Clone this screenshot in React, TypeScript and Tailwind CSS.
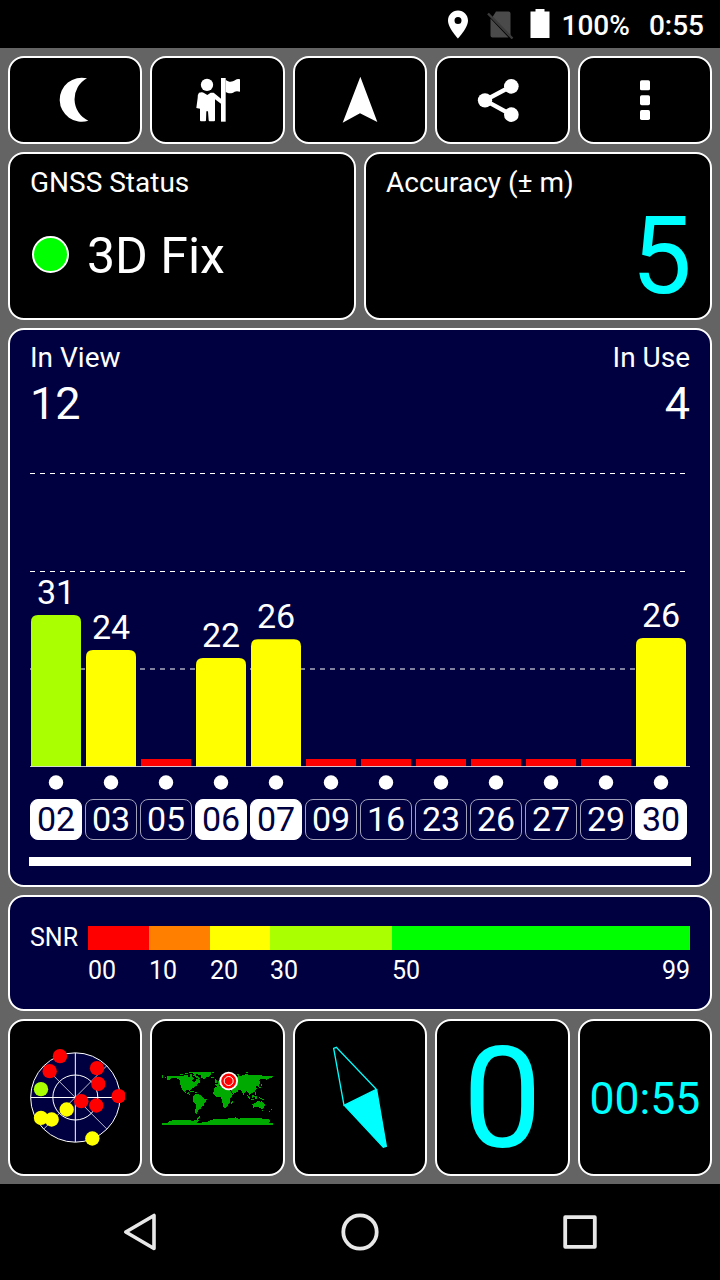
import type { ReactNode } from 'react';

type Satellite = { id: string; snr?: number; top: number; color: string; used?: boolean };

// top = y of the bar inside the 660x310 chart
const satellites: Satellite[] = [
  { id: '02', snr: 31, top: 158, color: '#aaff00', used: true },
  { id: '03', snr: 24, top: 193, color: '#ffff00' },
  { id: '05', top: 302, color: '#ff0000' },
  { id: '06', snr: 22, top: 201, color: '#ffff00', used: true },
  { id: '07', snr: 26, top: 182.2, color: '#ffff00', used: true },
  { id: '09', top: 302, color: '#ff0000' },
  { id: '16', top: 302, color: '#ff0000' },
  { id: '23', top: 302, color: '#ff0000' },
  { id: '26', top: 302, color: '#ff0000' },
  { id: '27', top: 302, color: '#ff0000' },
  { id: '29', top: 302, color: '#ff0000' },
  { id: '30', snr: 26, top: 181, color: '#ffff00', used: true },
];

const snrScale = [
  { label: '00', className: 'w-[61px] bg-[#ff0000]' },
  { label: '10', className: 'w-[61px] bg-[#ff8000]' },
  { label: '20', className: 'w-[60.4px] bg-[#ffff00]' },
  { label: '30', className: 'w-[121.6px] bg-[#aaff00]' },
  { label: '50', className: 'w-[298px] bg-[#00ff00]' },
];

const skyDots = [
  { x: 180, y: 123, color: '#ff0000' },
  { x: 149, y: 168, color: '#ff0000' },
  { x: 291, y: 159, color: '#ff0000' },
  { x: 295, y: 206, color: '#ff0000' },
  { x: 356, y: 243, color: '#ff0000' },
  { x: 289, y: 271, color: '#ff0000' },
  { x: 244, y: 258, color: '#ff0000' },
  { x: 123, y: 222, color: '#aaff00' },
  { x: 200, y: 283, color: '#ffff00' },
  { x: 123, y: 308, color: '#ffff00' },
  { x: 155, y: 313, color: '#ffff00' },
  { x: 277, y: 370, color: '#ffff00' },
];

function StatusBar() {
  return (
    <header className="flex h-12 items-center justify-end pr-4 text-[28px] leading-[48px] font-medium">
      <svg className="mr-[17px] h-[30px] w-6" viewBox="0 0 24 30" fill="#fff">
        <path
          fillRule="evenodd"
          d="M12 1.5C6.3 1.5 2 6 2 11.5 2 19 12 29.5 12 29.5S22 19 22 11.5C22 6 17.700 1.500 12 1.500zM12 8a3.500 3.500 0 1 1 0 7 3.500 3.500 0 0 1 0-7z"
        />
      </svg>
      <svg className="mr-[16px] h-[30px] w-[27px]" viewBox="0 0 27 30">
        <path d="M9 2.500h12.500a2 2 0 0 1 2 2v22L5.500 8zM3.500 9.500L21.500 28.500H5.500a2 2 0 0 1-2-2z" fill="#4a4a4a" />
        <path d="M1 4.500L25.500 29.500" stroke="#3c3c3c" strokeWidth="2.400" />
      </svg>
      <svg className="mr-3 h-[30px] w-[20px]" viewBox="0 0 20 30" fill="#fff">
        <path d="M5.500 0h9v2.500h5V29H.5V2.500h5z" />
      </svg>
      <span className="mr-[19px] pt-[3px]">100%</span>
      <span className="pt-[3px]">0:55</span>
    </header>
  );
}

function Tile({ children, className = '' }: { children: ReactNode; className?: string }) {
  return (
    <div
      className={`flex min-w-0 flex-1 items-center justify-center rounded-2xl border-2 border-white bg-black ${className}`}
    >
      {children}
    </div>
  );
}

function Toolbar() {
  return (
    <nav className="flex h-[88px] gap-2">
      <Tile>
        <svg className="size-[52px]" viewBox="146 78 156 156" fill="#fff">
          <path d="M260 91A66 66 0 1 0 264 218A71 71 0 0 1 260 91z" />
        </svg>
      </Tile>
      <Tile>
        <svg className="size-[52px]" viewBox="576 78 156 156" fill="#fff">
          <circle cx="621" cy="110.500" r="18.500" />
          <path d="M597 134Q608 131 612 135L622 141L632 134L641 134L664 153V168L645 154V217Q645 220 642 220H629Q626 220 626 217L624 190H619L618 217Q618 220 615 220H603Q600 220 600 217V182L589 180L593 150Q593 138 597 134z" />
          <path d="M663 90H677V221H663z" />
          <path d="M677 95C688 104 696 102 706 96Q712 92 720 94V131Q710 128 704 131C696 136 688 138 677 132z" />
        </svg>
      </Tile>
      <Tile>
        <svg className="size-[52px]" viewBox="132 78 156 156" fill="#fff">
          <path d="M211 86L262 222L210 196L158 224z" />
        </svg>
      </Tile>
      <Tile>
        <svg className="size-[52px]" viewBox="558 78 156 156" fill="#fff">
          <path d="M664 115L585 157L664 200" fill="none" stroke="#fff" strokeWidth="13" />
          <circle cx="585" cy="157" r="21.500" />
          <circle cx="664" cy="115" r="22" />
          <circle cx="664" cy="200" r="22" />
        </svg>
      </Tile>
      <Tile>
        <svg className="size-[52px]" viewBox="987 78 156 156" fill="#fff">
          <rect x="1050" y="97" width="30" height="30" rx="5" />
          <rect x="1050" y="141.500" width="30" height="30" rx="5" />
          <rect x="1050" y="186" width="30" height="30" rx="5" />
        </svg>
      </Tile>
    </nav>
  );
}

function SignalChart() {
  return (
    <svg className="block h-[310px] w-[660px]" viewBox="0 0 660 310">
      <g stroke="#fff" strokeDasharray="5 5">
        <path d="M0 16.500H656" />
        <path d="M0 114.500H656" />
        <path d="M0 212H656" />
      </g>
      {satellites.map((s, i) => {
        const x = 1 + i * 55;
        if (!s.snr) {
          return <rect key={s.id} x={x} y={s.top} width="50" height="7.500" fill={s.color} />;
        }
        return (
          <g key={s.id}>
            <path
              d={`M${x} 309.500V${s.top + 7}q0 -7 7 -7h36q7 0 7 7V309.500z`}
              fill={s.color}
            />
            <text x={x + 25} y={s.top - 11} fill="#fff" fontSize="34" textAnchor="middle">
              {s.snr}
            </text>
          </g>
        );
      })}
      <path d="M0 309.500H660" stroke="#fff" strokeOpacity=".75" />
    </svg>
  );
}

function SatellitePanel() {
  return (
    <section className="h-[559px] rounded-2xl border-2 border-white bg-[#000040] px-5">
      <div className="flex justify-between pt-3 text-[28px] leading-8">
        <span>In View</span>
        <span>In Use</span>
      </div>
      <div className="flex h-[83px] justify-between text-[45px] leading-[60px]">
        <span>12</span>
        <span>4</span>
      </div>
      <SignalChart />
      <div className="flex gap-[3px] pt-2">
        {satellites.map((s) => (
          <div key={s.id} className="flex w-[52px] shrink-0 flex-col items-center">
            <svg className="size-4" viewBox="0 0 16 16" fill="#fff">
              <circle cx="8" cy="7.500" r="7.200" />
            </svg>
            <span
              className={`mt-2 flex h-[41px] w-[52px] items-center justify-center rounded-lg border text-[34px] leading-[39px] ${
                s.used ? 'border-white bg-white text-[#000040]' : 'border-[#a0a0b8]'
              }`}
            >
              {s.id}
            </span>
          </div>
        ))}
      </div>
      <div className="-mx-px mt-[17px] h-[9px] bg-white" />
    </section>
  );
}

function SnrLegend() {
  return (
    <section className="flex h-[116px] rounded-2xl border-2 border-white bg-[#000040] pt-[29px] pl-5 text-[25px]">
      <span className="w-[58px] leading-[23px]">SNR</span>
      <div className="w-[602px]">
        <div className="flex h-6">
          {snrScale.map((s) => (
            <span key={s.label} className={s.className} />
          ))}
        </div>
        <div className="flex leading-[42px]">
          <span className="w-[61px]">00</span>
          <span className="w-[61px]">10</span>
          <span className="w-[60px]">20</span>
          <span className="w-[122px]">30</span>
          <span className="flex-1">50</span>
          <span>99</span>
        </div>
      </div>
    </section>
  );
}

function SkyPlot() {
  return (
    <svg className="size-[100px] shrink-0" viewBox="75 95.500 300 300">
      <g stroke="#fff" strokeWidth="3">
        <circle cx="226" cy="247" r="134" fill="#000040" />
        <circle cx="226" cy="247" r="67.500" fill="none" />
        <path d="M92 247H360M226 113V381" />
        <path d="M131 152L320 341M131 342L320 152" strokeWidth="2.200" />
      </g>
      {skyDots.map((d) => (
        <circle key={`${d.x}-${d.y}`} cx={d.x} cy={d.y} r="21.500" fill={d.color} />
      ))}
    </svg>
  );
}

function WorldMap() {
  return (
    <svg className="mt-[2px] h-[54px] w-[112px] shrink-0" viewBox="36 168 336 162">
      <g fill="#00aa00" shapeRendering="crispEdges">
        {/* Americas */}
        <path d="M37 181h3v7h-3zM45 186h4v3h-4zM51 183H110L120 188L118 182L124 183L132 190L126 197L134 202L140 190L147 193L152 204L143 206L139 213L132 217L128 220L121 224L122 231L117 225L107 225L106 231L112 234L118 231L116 236L123 240L129 243L118 239L104 232L98 225L94 217L90 208L90 196L80 189L66 189L58 196L50 193z" />
        <path d="M89 177h9v4h-9zM102 179h12v4h-12zM105 174h8v3h-8zM119 178h8v4h-8zM128 181L136 180L148 188L150 193L140 188zM120 227h12v3h-12zM134 231h7v3h-7z" />
        <path d="M117 171H184V176L180 183L169 187L163 193L155 189L152 181L144 178L132 179L128 174L117 174zM187 171h6v3h-6zM182 185h9v5h-9z" />
        <path d="M131 242L139 236L148 239L157 243L159 249L170 253L169 260L163 265L162 272L154 275L151 282L145 284L142 294L139 297L135 292L137 280L137 268L131 261L128 253z" />
        {/* Africa and Eurasia */}
        <path d="M193 221L199 215L213 213L215 218L229 218L238 220L243 233L250 237L241 250L241 262L236 267L231 277L222 280L218 267L216 253L211 246L198 245L189 235zM244 260L249 257L246 269L243 268z" />
        <path d="M195 192L200 195L203 204L195 204zM195 207L206 205L203 200L211 194L211 186L226 178L250 181L264 186L264 181L272 183L290 177L300 181L322 180L348 183H369V187L361 188L354 192L347 198L348 191L333 191L328 196L331 204L325 210L327 215L317 213L320 220L313 231L302 235L300 243L293 231L290 227L285 232L281 240L275 227L266 224L263 231L249 237L240 219L235 213L222 215L211 210L199 214z" />
        <path d="M288 172h6v3h-6zM262 176h5v4h-5zM333 207h3v7h-3zM326 216h6v3h-6z" />
        {/* islands and Australia */}
        <path d="M290 239L299 247L302 253L295 249zM305 241L312 239L314 246L307 249zM303 252h9v3h-9zM316 244h4v8h-4zM314 232h4v7h-4zM324 246L333 248L343 255L333 253z" />
        <path d="M307 267L317 263L322 258L329 257L331 262L335 257L345 270L342 279L335 282L326 276L309 278zM335 285h4v3h-4zM362 281h4v4h-4zM357 287h4v4h-4z" />
        {/* Antarctica */}
        <path d="M37 324H54V320L68 316L101 315L130 317L143 313L140 310L149 303L150 307L145 312L146 319L140 323H153L176 319L189 313L232 311L257 307L266 311L296 308L316 309L355 312L361 318L355 324H369V330H37z" />
      </g>
      <circle cx="236" cy="198" r="28" fill="#fff" />
      <circle cx="236" cy="198" r="22.500" fill="#f00" />
      <circle cx="236" cy="198" r="13.500" fill="#f00" stroke="#fff" strokeWidth="3" />
    </svg>
  );
}

function BottomTiles() {
  return (
    <div className="flex h-[157px] gap-2 text-[#00ffff]">
      <Tile>
        <SkyPlot />
      </Tile>
      <Tile>
        <WorldMap />
      </Tile>
      <Tile>
        <svg className="h-[107px] w-[60px]" viewBox="120 87 180 321" stroke="#0ff" strokeWidth="4">
          <path d="M131 100L139 97L259 223L162 271z" fill="none" />
          <path d="M164 272L260 225L289 394L280 397z" fill="#0ff" />
        </svg>
      </Tile>
      <Tile>
        <span className="mt-[3px] text-[141px] leading-[149px]">0</span>
      </Tile>
      <Tile>
        <span className="pt-[4px] text-[44.500px] leading-[60px]">00:55</span>
      </Tile>
    </div>
  );
}

function NavBar() {
  return (
    <footer className="flex h-24 items-center justify-center gap-[172px]">
      <svg className="size-12" viewBox="0 0 48 48" fill="none" stroke="#e8e8e8" strokeWidth="3.600" strokeLinejoin="round">
        <path d="M17.800 24L46 7.500V40.500z" transform="translate(-8 0)" />
      </svg>
      <svg className="size-12" viewBox="0 0 48 48" fill="none" stroke="#e8e8e8" strokeWidth="3.800">
        <circle cx="24" cy="24" r="16.700" />
      </svg>
      <svg className="size-12" viewBox="0 0 48 48" fill="none" stroke="#e8e8e8" strokeWidth="3.800" strokeLinejoin="round">
        <path d="M9.200 9.200H38.800V38.800H9.200z" />
      </svg>
    </footer>
  );
}

export default function App() {
  return (
    <div className="h-[1280px] w-[720px] overflow-hidden bg-black font-['Roboto',sans-serif] text-white">
      <StatusBar />
      <main className="flex h-[1136px] flex-col gap-2 bg-[#646464] p-2">
        <Toolbar />
        <div className="flex h-[167.500px] gap-2">
          <section className="flex-1 rounded-2xl border-2 border-white bg-black px-5 pt-[13px]">
            <h2 className="text-[28px] leading-8">GNSS Status</h2>
            <div className="flex items-center pt-[25px]">
              <span className="ml-0.5 size-[37px] rounded-full border-2 border-white bg-[#00ff00]" />
              <span className="ml-[18px] pt-[5px] text-[50px] leading-[55px]">3D Fix</span>
            </div>
          </section>
          <section className="flex-1 rounded-2xl border-2 border-white bg-black px-5 pt-[13px]">
            <h2 className="text-[28px] leading-8">Accuracy (± m)</h2>
            <div className="-mr-0.5 text-right text-[108px] leading-[115px] text-[#00ffff]">5</div>
          </section>
        </div>
        <SatellitePanel />
        <SnrLegend />
        <BottomTiles />
      </main>
      <NavBar />
    </div>
  );
}
